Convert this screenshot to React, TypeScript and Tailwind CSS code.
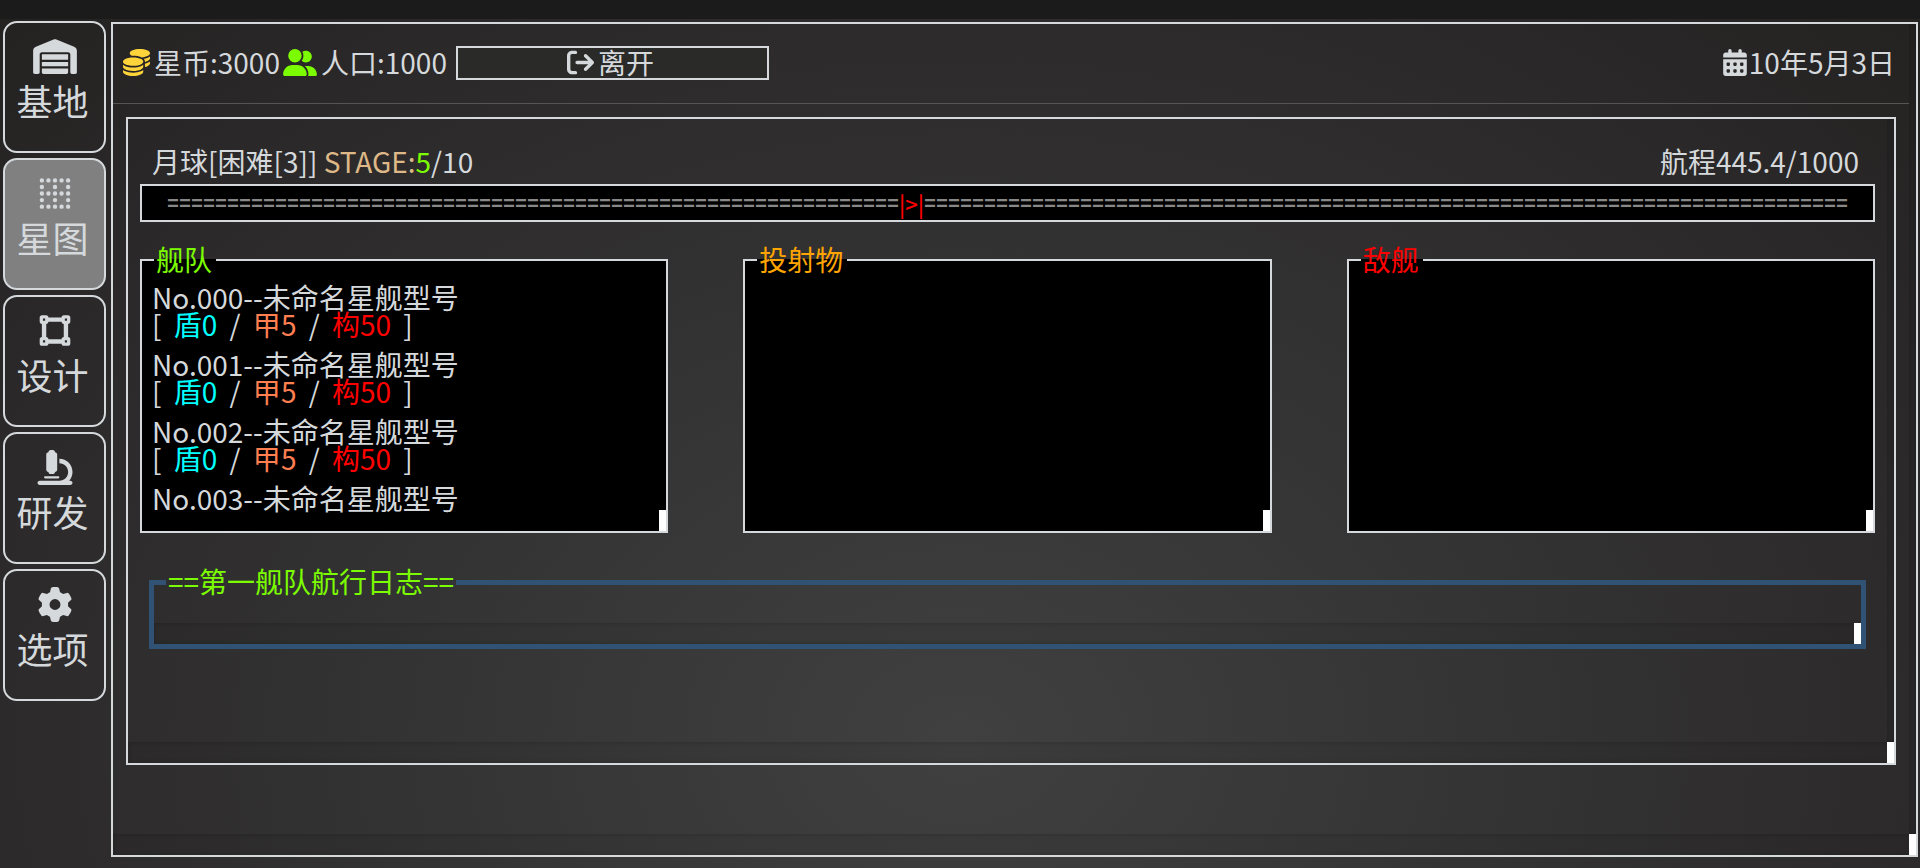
import type { ReactNode } from "react";
import type { IconType } from "react-icons";
import {
    FaArrowRightFromBracket,
    FaBorderNone,
    FaCalendarDays,
    FaCoins,
    FaGear,
    FaMicroscope,
    FaUserGroup,
    FaVectorSquare,
    FaWarehouse,
} from "react-icons/fa6";

const menu: { label: string; Icon: IconType; iconClass: string }[] = [
    { label: "基地", Icon: FaWarehouse, iconClass: "w-11" },
    { label: "星图", Icon: FaBorderNone, iconClass: "w-8" },
    { label: "设计", Icon: FaVectorSquare, iconClass: "w-8" },
    { label: "研发", Icon: FaMicroscope, iconClass: "w-9" },
    { label: "选项", Icon: FaGear, iconClass: "w-9" },
];

type Ship = {
    no: string;
    name: string;
    stats?: { shield: number; armor: number; hull: number };
};

const ships: Ship[] = [
    { no: "000", name: "未命名星舰型号", stats: { shield: 0, armor: 5, hull: 50 } },
    { no: "001", name: "未命名星舰型号", stats: { shield: 0, armor: 5, hull: 50 } },
    { no: "002", name: "未命名星舰型号", stats: { shield: 0, armor: 5, hull: 50 } },
    { no: "003", name: "未命名星舰型号" },
];

const TRACK_BEFORE = 61;
const TRACK_AFTER = 77;

// white corner where the two scroll tracks meet
function ScrollCorner() {
    return <div className="absolute right-0 bottom-0 h-[21px] w-[7px] bg-white" />;
}

function ScrollTracks() {
    return (
        <>
            <div className="pointer-events-none absolute inset-x-0 bottom-0 h-[21px] bg-black/5 shadow-[inset_0_0_5px_rgba(0,0,0,0.2)]" />
            <div className="pointer-events-none absolute top-0 right-0 bottom-[21px] w-[7px] bg-black/5 shadow-[inset_0_0_5px_rgba(0,0,0,0.2)]" />
            <ScrollCorner />
        </>
    );
}

function Panel({
    title,
    titleClass,
    children,
}: {
    title: string;
    titleClass: string;
    children?: ReactNode;
}) {
    return (
        <fieldset className="relative h-[287px] min-w-0 border-2 border-[#d5d9dc] bg-black">
            <legend className={`ml-3 pr-1 pb-0.5 pl-0.5 leading-[26px] ${titleClass}`}>
                {title}
            </legend>
            <div className="px-2.5 pt-2.5">{children}</div>
            <ScrollCorner />
        </fieldset>
    );
}

function SideBar() {
    return (
        <nav className="flex w-[103px] shrink-0 flex-col gap-[5px]">
            {menu.map(({ label, Icon, iconClass }) => (
                <button
                    key={label}
                    className={`flex h-[132px] flex-col items-center gap-1.5 rounded-[14px] border-2 border-[#d5d9dc] pt-4 text-4xl leading-10 ${
                        label === "星图" ? "bg-[#808080]" : ""
                    }`}
                >
                    <Icon className={`h-[35px] ${iconClass}`} />
                    <span className="pr-1">{label}</span>
                </button>
            ))}
        </nav>
    );
}

function Header() {
    return (
        <header className="mr-[7px] flex h-20 items-center border-b border-[#555555] pr-3.5 pb-0.5 pl-2.5">
            <div className="flex w-40 items-center gap-1">
                <FaCoins className="h-[27px] w-[27px] text-[#ffd43b]" />
                <span className="pb-0.5">星币:3000</span>
            </div>
            <div className="flex w-[173px] items-center gap-1">
                <FaUserGroup className="h-[27px] w-[34px] text-[#7cfc00]" />
                <span className="pb-0.5">人口:1000</span>
            </div>
            <button className="flex h-[34px] w-[313px] items-center justify-center gap-1 border-2 border-[#d5d9dc] bg-[#2a2b29] pr-1">
                <FaArrowRightFromBracket className="h-[27px] w-[27px]" />
                <span className="pb-0.5">离开</span>
            </button>
            <div className="ml-auto flex items-center gap-0.5">
                <FaCalendarDays className="h-[27px] w-6" />
                <span className="pb-0.5">10年5月3日</span>
            </div>
        </header>
    );
}

export default function App() {
    return (
        <div className="flex min-h-screen flex-col bg-[radial-gradient(ellipse_at_50%_85%,#3f403f_0%,#333233_45%,#242121_100%)] font-['Noto_Sans_CJK_SC',sans-serif] text-[28px] leading-7 text-[#d5d9dc]">
            <div className="h-[19px] bg-[#1b1b1b]" />
            <div className="flex flex-1 gap-[5px] pt-0.5 pr-0.5 pb-[11px] pl-[3px]">
                <SideBar />
                <main className="relative mt-px min-w-0 flex-1 border-2 border-[#d5d9dc]">
                    <Header />
                    <section className="relative mt-[13px] mr-5 ml-[13px] h-[648px] border-2 border-[#d5d9dc] pt-7 pr-[19px] pl-3">
                        <div className="mb-[9px] flex justify-between pr-4 pl-3">
                            <h1>
                                月球[困难[3]]{" "}
                                <span className="text-[#deb887]">STAGE:</span>
                                <span className="text-[#7cfc00]">5</span>/10
                            </h1>
                            <span>航程445.4/1000</span>
                        </div>
                        <div className="flex h-[38px] items-center justify-center overflow-hidden border-2 border-[#d5d9dc] bg-black pt-1 font-['Liberation_Mono',monospace] text-xl font-bold whitespace-nowrap text-[#888888]">
                            {"=".repeat(TRACK_BEFORE)}
                            <span className="pb-1 font-['Noto_Sans_CJK_SC',sans-serif] text-[22px] font-medium text-[#ff0000]">
                                |&gt;|
                            </span>
                            {"=".repeat(TRACK_AFTER)}
                        </div>
                        <div className="mt-6 grid grid-cols-3 gap-[75px]">
                            <Panel title="舰队" titleClass="text-[#7cfc00]">
                                <ul className="flex flex-col gap-[13px] leading-[27px] whitespace-nowrap">
                                    {ships.map(({ no, name, stats }) => (
                                        <li key={no}>
                                            <p>
                                                No.{no}--{name}
                                            </p>
                                            {stats && (
                                                <p>
                                                    [{" "}
                                                    <span className="mx-1.5 text-[#00ffff]">
                                                        盾{stats.shield}
                                                    </span>{" "}
                                                    /{" "}
                                                    <span className="mx-1.5 text-[#ff7f50]">
                                                        甲{stats.armor}
                                                    </span>{" "}
                                                    /{" "}
                                                    <span className="mx-1.5 text-[#ff0000]">
                                                        构{stats.hull}
                                                    </span>{" "}
                                                    ]
                                                </p>
                                            )}
                                        </li>
                                    ))}
                                </ul>
                            </Panel>
                            <Panel title="投射物" titleClass="text-[#ffa500]" />
                            <Panel title="敌舰" titleClass="text-[#ff0000]" />
                        </div>
                        <fieldset className="relative mx-[9px] mt-[35px] h-[81px] border-[5px] border-[#305375]">
                            <legend className="ml-3 px-0.5 pb-0.5 leading-[26px] text-[#7cfc00]">
                                ==第一舰队航行日志==
                            </legend>
                            <div className="absolute inset-x-0 bottom-0 h-[21px] bg-black/5 shadow-[inset_0_0_5px_rgba(0,0,0,0.2)]" />
                            <ScrollCorner />
                        </fieldset>
                        <ScrollTracks />
                    </section>
                    <ScrollTracks />
                </main>
            </div>
        </div>
    );
}
